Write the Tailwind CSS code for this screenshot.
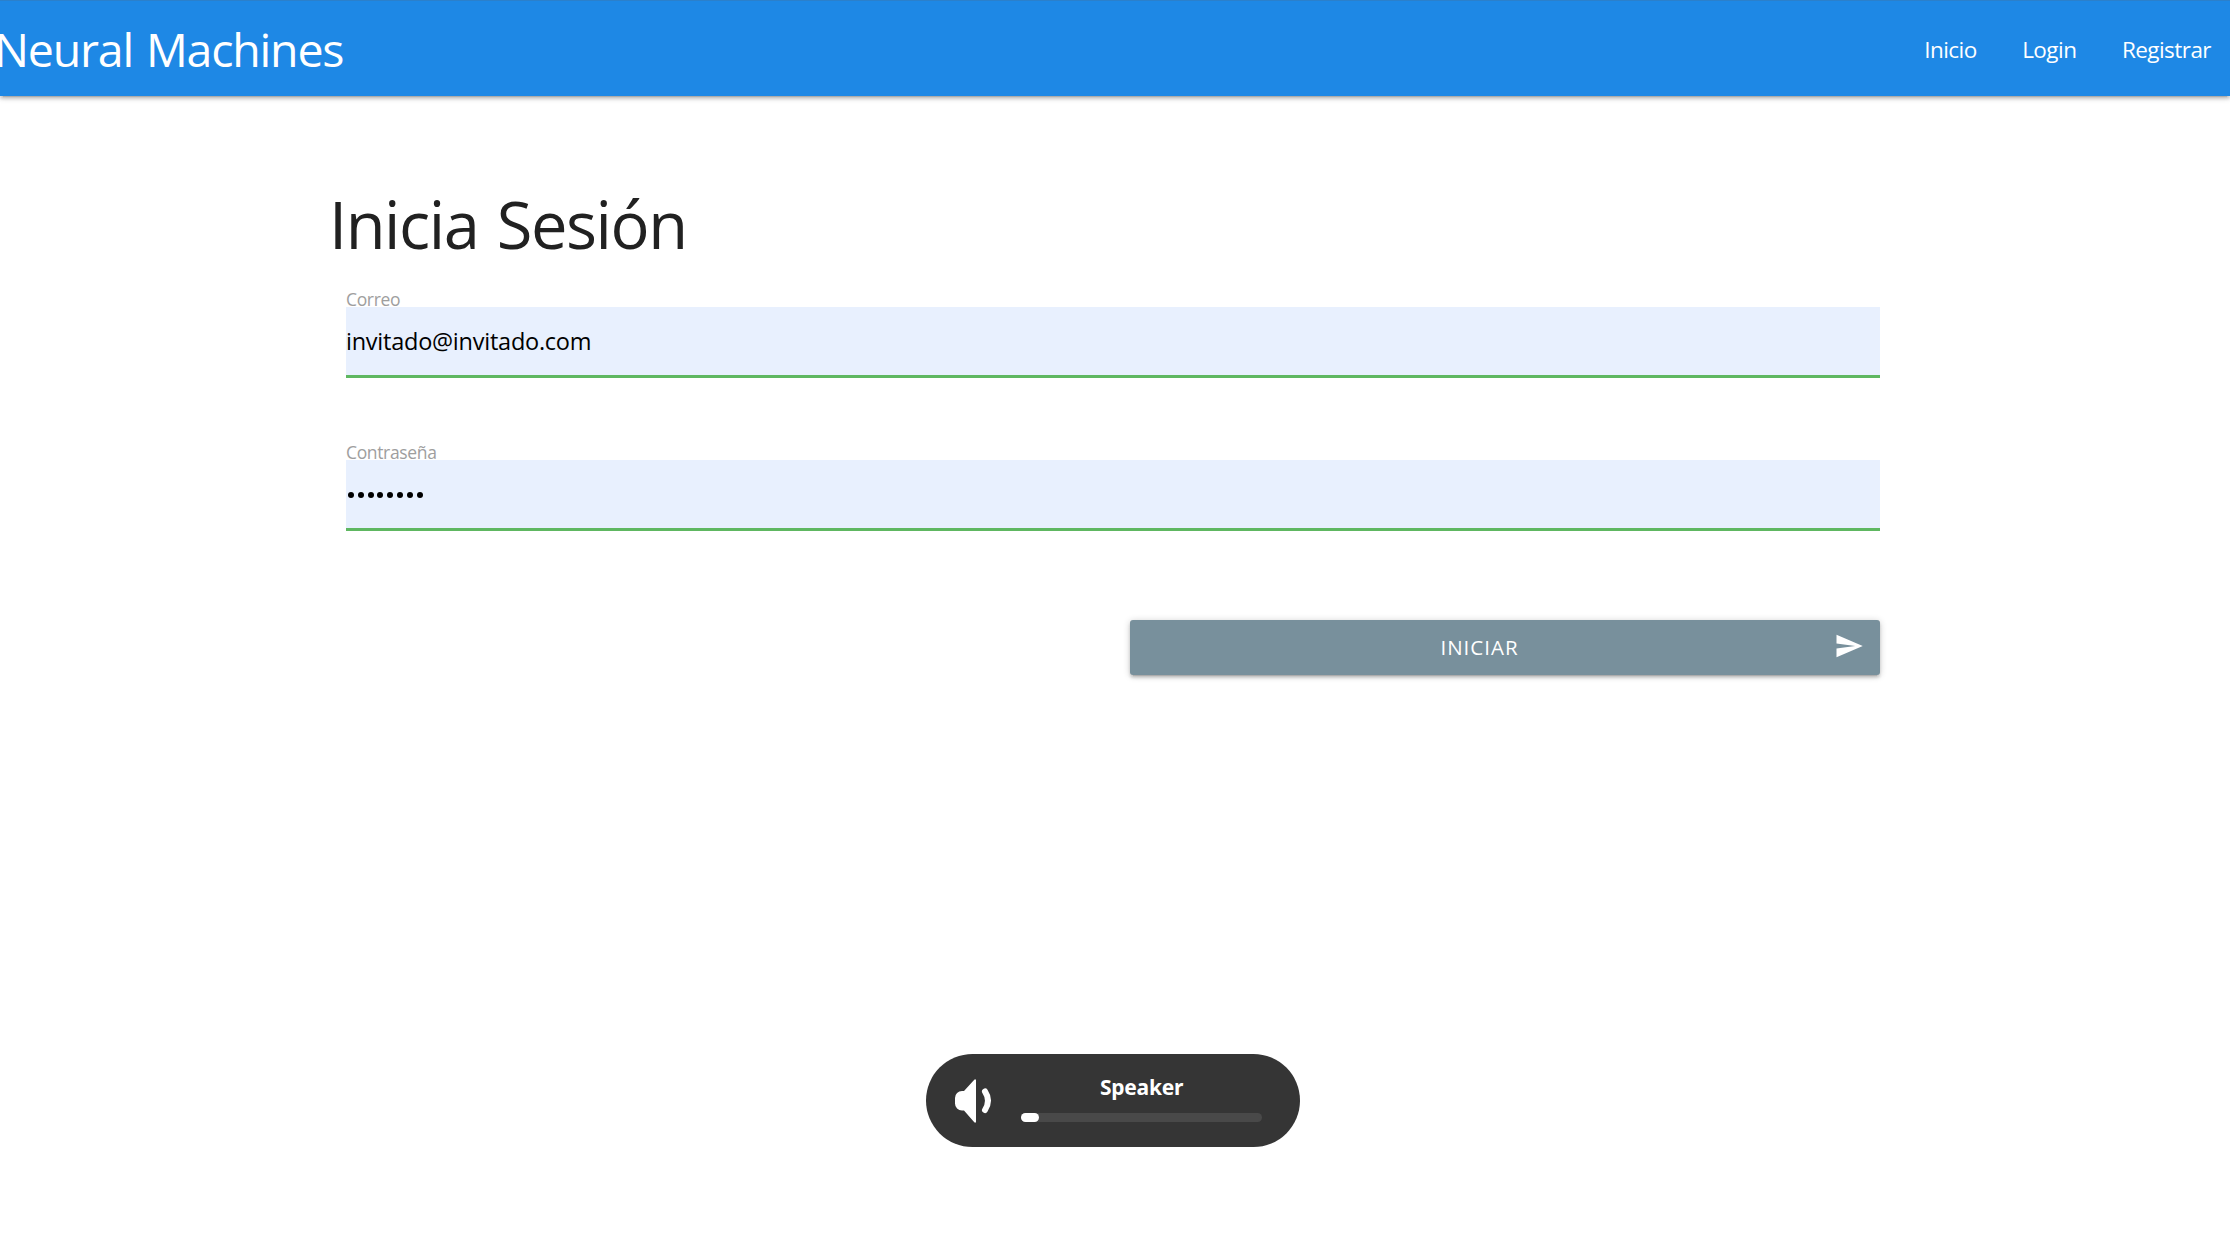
<!DOCTYPE html>
<html lang="es">
<head>
<meta charset="utf-8">
<title>Neural Machines</title>
<script src="https://cdn.jsdelivr.net/npm/@tailwindcss/browser@4"></script>
</head>
<body class="h-[1235px] overflow-hidden bg-white font-['Open_Sans',sans-serif] text-black">
<nav class="flex h-24 items-center justify-between border-t border-[#2b80cb] bg-[#1e88e5] pr-[19px] text-white shadow-[0_3px_3px_0_rgba(0,0,0,0.14),0_4px_1px_-3px_rgba(0,0,0,0.12),0_1px_7px_0_rgba(0,0,0,0.2)]">
  <a class="-ml-[6px] pt-px text-[46.5px] leading-[64px] tracking-[-1.2px] [word-spacing:2px] whitespace-nowrap">Neural Machines</a>
  <div class="flex gap-[45.5px] pt-[3px] text-[22.5px] leading-8 tracking-[-0.55px]">
    <a>Inicio</a><a>Login</a><a>Registrar</a>
  </div>
</nav>
<main class="ml-[330px] w-[1550px]">
  <h1 class="-ml-px pt-[83px] pb-[2px] text-[65px] leading-[90px] tracking-[-1.45px] [word-spacing:3px] text-[#212121] whitespace-nowrap">Inicia Sesión</h1>
  <form class="pl-4">
    <div class="pt-[17px]">
      <label class="block h-[19px] text-[17.5px] leading-[22px] tracking-[-0.35px] text-[#9e9e9e]">Correo</label>
      <div class="h-[71px] border-b-[3px] border-[#4caf50]/90 bg-[#e8f0fe] bg-clip-padding text-[23.5px] leading-[69px] tracking-[-0.24px]">invitado@invitado.com</div>
    </div>
    <div class="pt-[63px]">
      <label class="block h-[19px] text-[17.5px] leading-[22px] tracking-[-0.35px] text-[#9e9e9e]">Contraseña</label>
      <div class="flex h-[71px] items-center gap-[3.8px] border-b-[3px] border-[#4caf50]/90 bg-[#e8f0fe] bg-clip-padding pt-[2px] pl-[2px]">
        <i class="size-[6px] rounded-full bg-black"></i><i class="size-[6px] rounded-full bg-black"></i><i class="size-[6px] rounded-full bg-black"></i><i class="size-[6px] rounded-full bg-black"></i><i class="size-[6px] rounded-full bg-black"></i><i class="size-[6px] rounded-full bg-black"></i><i class="size-[6px] rounded-full bg-black"></i><i class="size-[6px] rounded-full bg-black"></i>
      </div>
    </div>
    <button type="button" class="mt-[89px] ml-auto flex h-[55px] w-[750px] items-center rounded-[3px] bg-[#78909c] pr-4 text-white shadow-[0_3px_3px_0_rgba(0,0,0,0.14),0_4px_1px_-3px_rgba(0,0,0,0.12),0_1px_7px_0_rgba(0,0,0,0.2)]">
      <span class="flex-1 pb-[2px] text-[20.5px] leading-[52px] tracking-[1px]">INICIAR</span>
      <svg class="-mt-[3px] ml-[5px] size-[30px]" viewBox="0 0 24 24" fill="currentColor"><path d="M2.01 21 23 12 2.01 3 2 10l15 2-15 2z"/></svg>
    </button>
  </form>
</main>
<div class="absolute top-[1054px] left-[926px] flex h-[93px] w-[374px] rounded-full bg-[#353535] text-white">
  <svg class="mt-[24px] ml-[28px] h-[46px] w-[40px]" viewBox="0 0 40 46" fill="currentColor">
    <path d="M8 13h2L20.500 1.500H22v43h-1.500L10 32.500H8a7 7 0 0 1-7-7v-5.500a7 7 0 0 1 7-7Z"/>
    <path d="M31 13.500Q37 22.500 31 32" fill="none" stroke="currentColor" stroke-width="6" stroke-linecap="round"/>
  </svg>
  <div class="ml-[27px] w-[241px] pt-[19px]">
    <div class="h-[40px] text-center font-['Noto_Sans',sans-serif] text-[21px] leading-[28px] font-bold tracking-[-0.25px]">Speaker</div>
    <div class="h-[9px] rounded-full bg-[#494949]"><div class="h-full w-[18px] rounded-full bg-white"></div></div>
  </div>
</div>
</body>
</html>
